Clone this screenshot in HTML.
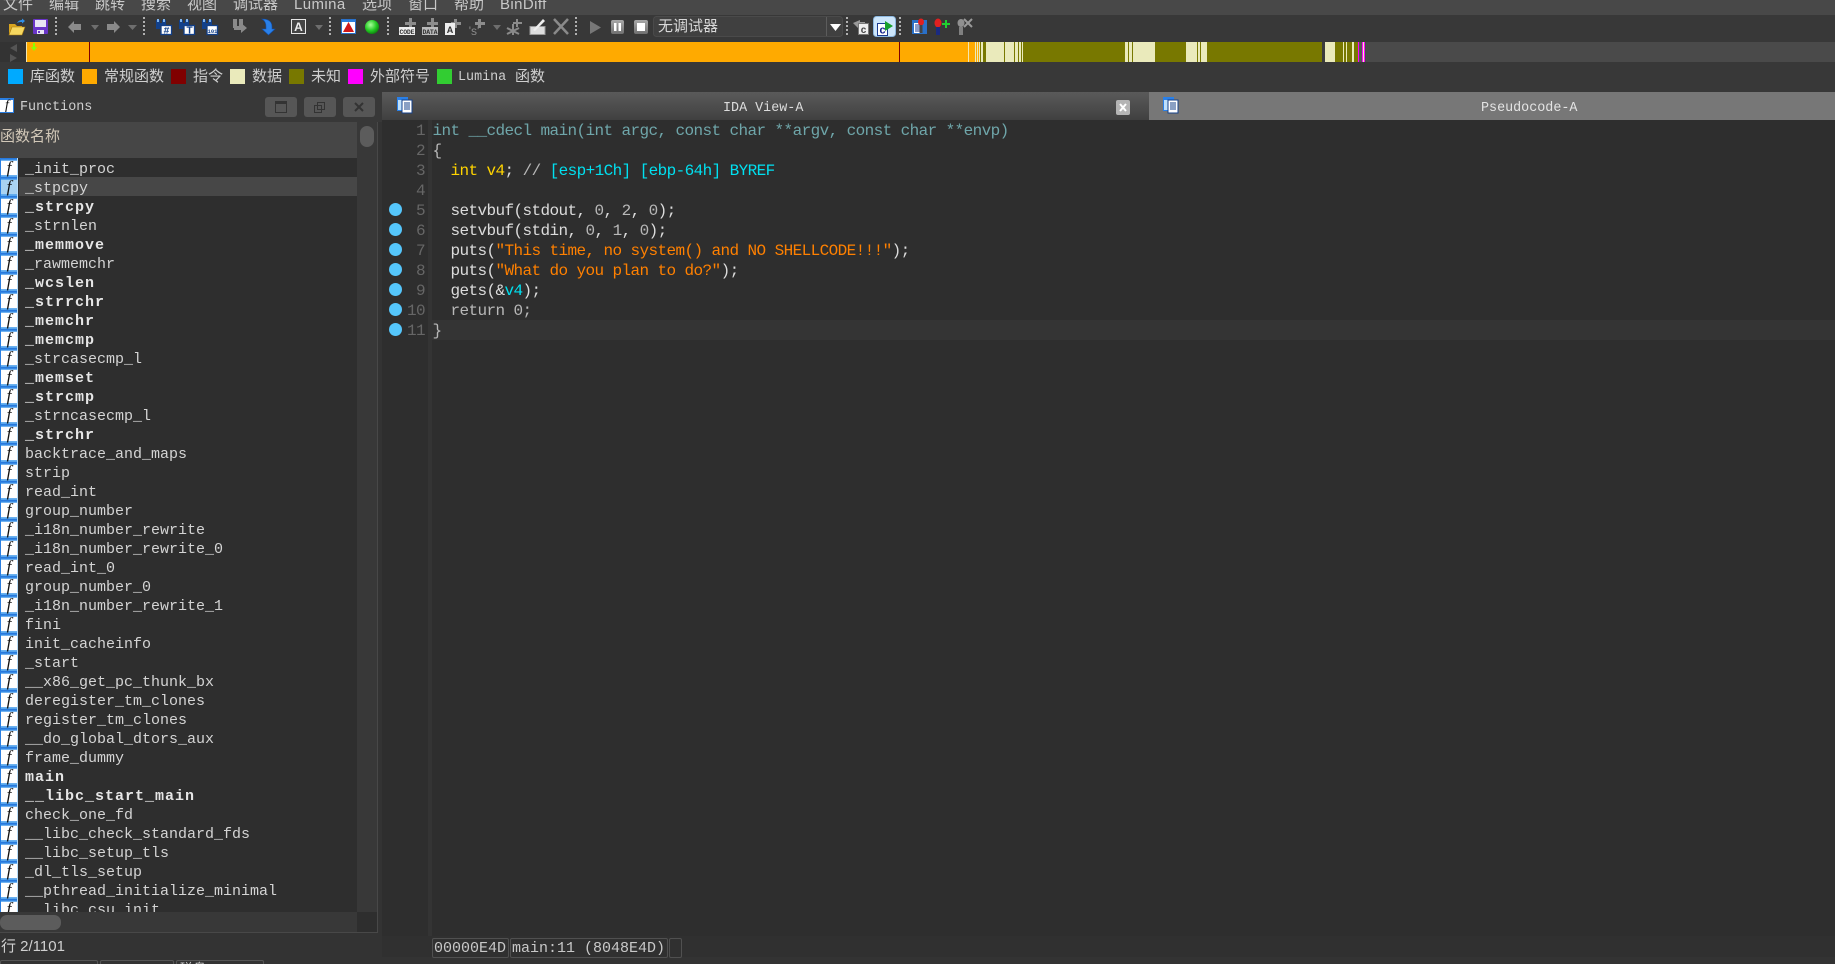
<!DOCTYPE html>
<html><head><meta charset="utf-8"><title>IDA</title>
<style>
html,body{margin:0;padding:0;background:#333;width:1835px;height:964px;overflow:hidden}
body{position:relative;font-family:"Liberation Sans","Noto Sans CJK SC",sans-serif;color:#ccc}
.a{position:absolute;white-space:pre}
.m{font-family:"Liberation Mono","Noto Sans CJK SC",monospace}
.menu{top:-5px;font-size:15px;line-height:20px;color:#c8c8c8}
.lg{top:68px;font-size:15px;line-height:18px;color:#cfcfcf}
.sq{position:absolute;top:69px;width:15px;height:15px}
#list{position:absolute;left:0;top:158px;width:357px;height:754px;overflow:hidden;background:#2e2e2e}
.r{height:19px;font:15px/24px "Liberation Mono",monospace;color:#d4d4d4;white-space:pre;position:relative;padding-left:25px}
.r b{letter-spacing:1px;color:#e6e6e6}
.r i{position:absolute;left:0;top:0;width:18px;height:19px;background:linear-gradient(#1f6fd8,#4aa0ee 14%,#fff 15%,#fff 90%,#5aa8ee 91%);font:italic 17px/19px "Liberation Serif",serif;color:#111;text-align:center;box-shadow:inset 1px 0 #2a7ee0,inset -1px 0 #b8dcf8}
.r.s{background:linear-gradient(#474747,#474747) 19px 0 no-repeat}
.r.s i{background:linear-gradient(#1f6fd8,#4aa0ee 14%,#a9d3f2 15%,#a9d3f2 90%,#5aa8ee 91%)}
.c{position:absolute;left:432.5px;font:16px/20px "Liberation Mono",monospace;letter-spacing:-.6px;white-space:pre;color:#dcdcdc}
.n{position:absolute;left:395px;width:30px;text-align:right;font:16px/20px "Liberation Mono",monospace;letter-spacing:-.6px;color:#666}
.k{color:#6fa6aa}.y{color:#ffd400}.q{color:#00e0f0}.o{color:#ff8000}.g{color:#b8b8b8}.w{color:#dcdcdc}
.d{position:absolute;left:388.5px;width:13px;height:13px;border-radius:50%;background:#55c6fb}
.cell{position:absolute;top:938px;height:18px;border:1px solid #505050;border-radius:2px;font:15px/19px "Liberation Mono",monospace;color:#c8c8c8;white-space:pre;overflow:hidden}
.wb{position:absolute;top:97px;width:32px;height:20px;background:#565656;border-radius:3px}
</style></head><body>

<div class="a" style="left:0;top:0;width:1835px;height:15px;background:#484848"></div>
<div class="a" style="left:0;top:15px;width:1835px;height:27px;background:#383838"></div>
<div class="a" style="left:0;top:62px;width:1835px;height:30px;background:#383838"></div>

<span class="a menu" style="left:3px">文件</span>
<span class="a menu" style="left:49px">编辑</span>
<span class="a menu" style="left:95px">跳转</span>
<span class="a menu" style="left:141px">搜索</span>
<span class="a menu" style="left:187px">视图</span>
<span class="a menu" style="left:233px">调试器</span>
<span class="a menu" style="left:294px;letter-spacing:.4px">Lumina</span>
<span class="a menu" style="left:362px">选项</span>
<span class="a menu" style="left:408px">窗口</span>
<span class="a menu" style="left:454px">帮助</span>
<span class="a menu" style="left:500px;letter-spacing:.4px">BinDiff</span>

<svg class="a" style="left:0;top:0" width="1835" height="64" viewBox="0 0 1835 64">
<defs>
<radialGradient id="gc" cx=".4" cy=".35" r=".7"><stop offset="0" stop-color="#a8ff9a"/><stop offset=".6" stop-color="#22c822"/><stop offset="1" stop-color="#0c7a0c"/></radialGradient>
<linearGradient id="gb" x1="0" y1="0" x2="0" y2="1"><stop offset="0" stop-color="#a8a8a8"/><stop offset="1" stop-color="#707070"/></linearGradient>
<g id="bin"><rect x="1" y="1" width="4" height="9" fill="#12408a"/><rect x="7" y="1" width="4" height="9" fill="#12408a"/><rect x="2" y="0" width="2" height="3" fill="#7fb4ee"/><rect x="8" y="0" width="2" height="3" fill="#7fb4ee"/><rect x="5" y="4" width="2" height="3" fill="#12408a"/><rect x="6" y="6.500" width="10.500" height="9" fill="#fff" stroke="#12408a" stroke-width="1.300"/></g>
</defs>

<!-- folder -->
<path d="M9 24h6l2 2h5v9H9z" fill="#d8a520"/><path d="M9 35l3-8h13l-3 8z" fill="#f6d860" stroke="#a87a10" stroke-width=".6"/><path d="M17 23c1-2 3-3 5-3v-1.500l3 2.500-3 2.500V22c-2 0-3 0-5 1z" fill="#2f8fe8"/>
<!-- save -->
<rect x="33" y="19" width="15" height="15" rx="1" fill="#6a35c8"/><rect x="35" y="20" width="11" height="7" fill="#e8e4f4"/><rect x="37" y="30" width="7" height="4" fill="#e8e4f4"/><rect x="38" y="31" width="2" height="2" fill="#6a35c8"/>
<g stroke="#b0b0b0" stroke-width="2" stroke-dasharray="2 2"><path d="M56 17v18M144 17v18M330 17v18M388 17v18M576 17v18M847 17v18M900 17v18"/></g>
<!-- nav arrows -->
<path d="M68 27l6-6v3h7v6h-7v3z" fill="#8a8a8a"/><path d="M120 27l-6-6v3h-7v6h7v3z" fill="#8a8a8a"/>
<g fill="#6e6e6e"><path d="M91 25h8l-4 5z"/><path d="M128 25h9l-4.500 5z"/><path d="M315 25h8l-4 5z"/><path d="M493 25h8l-4 5z"/></g>
<!-- binoculars -->
<use href="#bin" x="155" y="19"/><use href="#bin" x="178" y="19"/><use href="#bin" x="201" y="19"/>
<text x="166.500" y="33.500" font-family="Liberation Mono" font-weight="bold" font-size="10" fill="#12408a" text-anchor="middle">#</text>
<text x="189.500" y="33.500" font-family="Liberation Sans" font-weight="bold" font-size="10" fill="#12408a" text-anchor="middle">T</text>
<text x="212.500" y="33" font-family="Liberation Mono" font-weight="bold" font-size="5.500" fill="#12408a" text-anchor="middle">101</text>
<!-- grey binoculars -->
<g fill="#8a8a8a"><rect x="233" y="19" width="4" height="9"/><rect x="239" y="19" width="4" height="9"/><path d="M234 26h7v-3l6 5-6 5v-3h-7z"/></g>
<path d="M262 19c6 0 10 2 10 8v2h3l-6.500 6-6.500-6h4v-2c0-4-1-6-4-8z" fill="#2a80e8" stroke="#0f4fb0" stroke-width=".6"/>
<!-- A box -->
<rect x="291.500" y="19.500" width="14" height="14" fill="#444" stroke="#e6e6e6"/><text x="298.500" y="31" font-family="Liberation Sans" font-weight="bold" font-size="12" fill="#eee" text-anchor="middle">A</text>
<!-- warning -->
<rect x="341.500" y="19.500" width="14" height="14" fill="#fff" stroke="#2a70c8"/><rect x="342" y="20" width="13" height="2" fill="#2a80e0"/><path d="M348.500 22l5.500 10h-11z" fill="#d01818"/>
<circle cx="372" cy="27" r="7" fill="url(#gc)"/>
<!-- code/data -->
<g fill="#8c8c8c"><path d="M409 18h3v4h4v3h-4v3h-3v-3h-4v-3h4z"/><path d="M431 18h3v4h4v3h-4v3h-3v-3h-4v-3h4z"/><path d="M454 19h3v3h4v3h-4v3h-3v-3h-3v-3h3z"/><path d="M478 19h3v3h4v3h-4v3h-3v-3h-3v-3h3z"/><path d="M516 19h2v3h4v2h-4v3h-2v-3h-3v-2h3z"/></g>
<rect x="399" y="27" width="16" height="8" fill="#eee"/><text x="407" y="34" font-family="Liberation Mono" font-weight="bold" font-size="6.500" fill="#333" text-anchor="middle" textLength="15">CODE</text>
<rect x="422" y="27" width="16" height="8" fill="#bbb"/><text x="430" y="34" font-family="Liberation Mono" font-weight="bold" font-size="6.500" fill="#333" text-anchor="middle" textLength="15">DATA</text>
<rect x="445" y="23" width="10" height="12" fill="#eee"/><text x="450" y="33" font-family="Liberation Sans" font-weight="bold" font-size="9" fill="#333" text-anchor="middle">A</text>
<text x="474" y="35" font-family="Liberation Sans" font-size="12" fill="#8a8a8a" text-anchor="middle">'s'</text>
<g stroke="#8a8a8a" stroke-width="2"><path d="M507 28l12 6M513 24v11M519 28l-12 6"/></g>
<rect x="530" y="26.500" width="15" height="8" fill="#ddd" stroke="#999"/><path d="M533 30l10-11 2 2-10 10z" fill="#eee"/>
<path d="M554 19l14 15M568 19l-14 15" stroke="#8a8a8a" stroke-width="2.500"/>
<!-- debugger -->
<path d="M590 21l11 6.500-11 6.500z" fill="#777"/>
<rect x="611" y="20" width="13" height="14" rx="2" fill="url(#gb)"/><rect x="614" y="23" width="2.500" height="8" fill="#fff"/><rect x="618.500" y="23" width="2.500" height="8" fill="#fff"/>
<rect x="634" y="20" width="14" height="14" rx="2" fill="url(#gb)"/><rect x="637" y="23" width="8" height="8" fill="#fff"/>
<rect x="653.500" y="16.500" width="189" height="20" rx="3" fill="#404040" stroke="#4a4a4a"/>
<path d="M826.500 17v19" stroke="#5c5c5c"/><path d="M830 24h11l-5.500 7z" fill="#fff"/>
<path d="M853 23l7-3v2h5v6h-5v2z" fill="#999"/><rect x="858.500" y="23.500" width="10" height="11" fill="#eee" stroke="#777"/><text x="863.500" y="33" font-family="Liberation Sans" font-weight="bold" font-size="10" fill="#444" text-anchor="middle">c</text>
<rect x="873.500" y="16.500" width="22" height="20" rx="3" fill="#cde6fb" stroke="#8db8e0"/><rect x="877.500" y="23.500" width="10" height="12" fill="#fff" stroke="#1a3a90"/><text x="882.500" y="33.500" font-family="Liberation Sans" font-weight="bold" font-size="11" fill="#10208a" text-anchor="middle">c</text><path d="M885 21l8 5-8 5z" fill="#17a02c"/>
<rect x="912" y="20" width="15" height="14" fill="#2a70c8"/><rect x="914" y="23" width="7" height="10" fill="#fff"/><g stroke="#1a3a90"><path d="M915 25h5M915 27h5M915 29h5M915 31h5"/></g><ellipse cx="921" cy="22" rx="3" ry="3.500" fill="#e02020"/><rect x="919.500" y="25" width="3" height="8" fill="#444"/>
<ellipse cx="938" cy="23" rx="3.500" ry="4.500" fill="#e02020"/><rect x="936" y="27" width="4" height="8" fill="#1a2a80"/><path d="M946 20v8M942 24h8" stroke="#20d030" stroke-width="2"/>
<ellipse cx="961" cy="23" rx="3.500" ry="4" fill="#909090"/><rect x="959" y="27" width="4" height="8" fill="#808080"/><path d="M964 19l8 8M972 19l-8 8" stroke="#999" stroke-width="2"/>

<!-- nav bar -->
<path d="M10 48l7-4v8zM10 54l7 4-7 4z" fill="#555"/>
<g shape-rendering="crispEdges">
<rect x="1365" y="42" width="470" height="20" fill="#4a4a4a"/>
<rect x="26" y="42" width="1339" height="20" fill="#ffaa00"/>
<rect x="26" y="42" width="1" height="20" fill="#f3e6b0"/>
<rect x="89" y="42" width="1" height="20" fill="#800000"/>
<rect x="899" y="42" width="1" height="20" fill="#800000"/>
<rect x="968" y="42" width="1" height="20" fill="#f3e6b0"/>
<g fill="#787800"><rect x="975" y="42" width="390" height="20"/></g>
<rect x="976" y="42" width="4" height="20" fill="#ffaa00"/>
<g fill="#eaeabb">
<rect x="975" y="42" width="1" height="20"/><rect x="977" y="42" width="1" height="20"/><rect x="979" y="42" width="1" height="20"/><rect x="981" y="42" width="2" height="20"/>
<rect x="986" y="42" width="18" height="20"/><rect x="1005" y="42" width="9" height="20"/><rect x="1015" y="42" width="3" height="20"/><rect x="1019" y="42" width="2" height="20"/><rect x="1022" y="42" width="1" height="20"/>
<rect x="1125" y="42" width="3" height="20"/><rect x="1129" y="42" width="3" height="20"/><rect x="1133" y="42" width="22" height="20"/>
<rect x="1186" y="42" width="11" height="20"/><rect x="1198" y="42" width="2" height="20"/><rect x="1201" y="42" width="6" height="20"/>
<rect x="1325" y="42" width="10" height="20"/><rect x="1343" y="42" width="1" height="20"/><rect x="1346" y="42" width="1" height="20"/><rect x="1352" y="42" width="2" height="20"/>
</g>
<rect x="1322" y="42" width="3" height="20" fill="#3c3c3c"/>
<rect x="1358" y="42" width="1" height="20" fill="#ff00ff"/><rect x="1359" y="42" width="3" height="20" fill="#555"/><rect x="1362" y="42" width="1" height="20" fill="#ff00ff"/><rect x="1363" y="42" width="1" height="20" fill="#eaeabb"/><rect x="1364" y="42" width="1" height="20" fill="#ff00ff"/>
</g>
<path d="M33 43h2v4h2l-3 4-3-4h2z" fill="#8cff00"/>
</svg>
<span class="a" style="left:658px;top:16px;font-size:15px;line-height:20px;color:#d8d8d8;font-family:'Noto Sans CJK SC',sans-serif">无调试器</span>

<!-- legend -->
<div class="sq" style="left:8px;background:#00aaff"></div>
<div class="sq" style="left:82px;background:#ffaa00"></div>
<div class="sq" style="left:171px;background:#800000"></div>
<div class="sq" style="left:230px;background:#eaeabb"></div>
<div class="sq" style="left:289px;background:#787800"></div>
<div class="sq" style="left:348px;background:#ff00ff"></div>
<div class="sq" style="left:437px;background:#32cd32"></div>
<span class="a lg" style="left:30px">库函数</span>
<span class="a lg" style="left:104px">常规函数</span>
<span class="a lg" style="left:193px">指令</span>
<span class="a lg" style="left:252px">数据</span>
<span class="a lg" style="left:311px">未知</span>
<span class="a lg" style="left:370px">外部符号</span>
<span class="a lg m" style="left:458px;top:69px;font-size:13.4px">Lumina</span>
<span class="a lg" style="left:515px">函数</span>

<!-- Functions panel -->
<div class="a" style="left:0;top:92px;width:382px;height:30px;background:#383838"></div>
<div class="a" style="left:0;top:98px;width:14px;height:15px;background:#fff;box-shadow:inset 0 2px #2a7ee0,inset -1px 0 #2a7ee0,inset 0 -1px #2a7ee0;font:italic 14px/16px 'Liberation Serif',serif;color:#111;text-align:center">f</div>
<span class="a m" style="left:20px;top:99px;font-size:13.4px;line-height:18px;color:#cfcfcf">Functions</span>
<div class="wb" style="left:265px"></div><div class="wb" style="left:304px"></div><div class="wb" style="left:343px"></div>
<svg class="a" style="left:265px;top:97px" width="112" height="20" viewBox="0 0 112 20"><rect x="10.500" y="4.500" width="11" height="11" fill="none" stroke="#333"/><rect x="10" y="4" width="12" height="3" fill="#333"/><rect x="49.500" y="8.500" width="7" height="7" fill="none" stroke="#333"/><rect x="52.500" y="5.500" width="7" height="7" fill="none" stroke="#333"/><path d="M90 6l8 8M98 6l-8 8" stroke="#333" stroke-width="2"/></svg>

<div class="a" style="left:0;top:122px;width:357px;height:36px;background:#464646"></div>
<span class="a" style="left:0;top:127px;font-size:15px;line-height:20px;color:#d2c8b8">函数名称</span>

<div id="list">
<div class="r"><i>f</i>_init_proc</div>
<div class="r s"><i>f</i>_stpcpy</div>
<div class="r"><i>f</i><b>_strcpy</b></div>
<div class="r"><i>f</i>_strnlen</div>
<div class="r"><i>f</i><b>_memmove</b></div>
<div class="r"><i>f</i>_rawmemchr</div>
<div class="r"><i>f</i><b>_wcslen</b></div>
<div class="r"><i>f</i><b>_strrchr</b></div>
<div class="r"><i>f</i><b>_memchr</b></div>
<div class="r"><i>f</i><b>_memcmp</b></div>
<div class="r"><i>f</i>_strcasecmp_l</div>
<div class="r"><i>f</i><b>_memset</b></div>
<div class="r"><i>f</i><b>_strcmp</b></div>
<div class="r"><i>f</i>_strncasecmp_l</div>
<div class="r"><i>f</i><b>_strchr</b></div>
<div class="r"><i>f</i>backtrace_and_maps</div>
<div class="r"><i>f</i>strip</div>
<div class="r"><i>f</i>read_int</div>
<div class="r"><i>f</i>group_number</div>
<div class="r"><i>f</i>_i18n_number_rewrite</div>
<div class="r"><i>f</i>_i18n_number_rewrite_0</div>
<div class="r"><i>f</i>read_int_0</div>
<div class="r"><i>f</i>group_number_0</div>
<div class="r"><i>f</i>_i18n_number_rewrite_1</div>
<div class="r"><i>f</i>fini</div>
<div class="r"><i>f</i>init_cacheinfo</div>
<div class="r"><i>f</i>_start</div>
<div class="r"><i>f</i>__x86_get_pc_thunk_bx</div>
<div class="r"><i>f</i>deregister_tm_clones</div>
<div class="r"><i>f</i>register_tm_clones</div>
<div class="r"><i>f</i>__do_global_dtors_aux</div>
<div class="r"><i>f</i>frame_dummy</div>
<div class="r"><i>f</i><b>main</b></div>
<div class="r"><i>f</i><b>__libc_start_main</b></div>
<div class="r"><i>f</i>check_one_fd</div>
<div class="r"><i>f</i>__libc_check_standard_fds</div>
<div class="r"><i>f</i>__libc_setup_tls</div>
<div class="r"><i>f</i>_dl_tls_setup</div>
<div class="r"><i>f</i>__pthread_initialize_minimal</div>
<div class="r"><i>f</i>__libc_csu_init</div>
</div>
<div class="a" style="left:357px;top:122px;width:20px;height:790px;background:#383838"></div>
<div class="a" style="left:360px;top:126px;width:14px;height:21px;background:#5c5c5c;border-radius:7px"></div>
<div class="a" style="left:0;top:912px;width:357px;height:20px;background:#383838"></div>
<div class="a" style="left:357px;top:912px;width:20px;height:20px;background:#2e2e2e"></div>
<div class="a" style="left:0;top:915px;width:61px;height:15px;background:#5c5c5c;border-radius:7px"></div>
<div class="a" style="left:0;top:932px;width:378px;height:1px;background:#484848"></div>
<div class="a" style="left:377px;top:122px;width:1px;height:810px;background:#484848"></div>
<span class="a" style="left:1px;top:937px;font-size:15px;line-height:20px;color:#d0d0d0">行 2/1101</span>

<!-- bottom tabs -->
<div class="a" style="left:0;top:960px;width:96px;height:6px;border:1px solid #555;border-radius:2px"></div>
<div class="a" style="left:100px;top:960px;width:72px;height:6px;border:1px solid #555;border-radius:2px"></div>
<div class="a" style="left:176px;top:960px;width:86px;height:6px;border:1px solid #555;border-radius:2px;overflow:hidden"><span style="position:absolute;left:3px;top:0;font-size:13px;line-height:15px;color:#ccc">磁盘</span></div>

<!-- right panel -->
<div class="a" style="left:382px;top:92px;width:767px;height:28px;background:linear-gradient(#5a5a5a,#404040)"></div>
<div class="a" style="left:1149px;top:92px;width:686px;height:28px;background:#777"></div>
<svg class="a" style="left:397px;top:97px" width="16" height="17" viewBox="0 0 16 17"><rect x="0" y="0" width="11" height="14" fill="#2a80e8"/><rect x="1" y="3" width="9" height="10" fill="#bfe0fb"/><rect x="5" y="3" width="10" height="13" fill="#fff" stroke="#14408a"/><path d="M7 6h6M7 8h6M7 10h6M7 12h6" stroke="#14408a"/></svg>
<svg class="a" style="left:1163px;top:97px" width="16" height="17" viewBox="0 0 16 17"><rect x="0" y="0" width="11" height="14" fill="#2a80e8"/><rect x="1" y="3" width="9" height="10" fill="#bfe0fb"/><rect x="5" y="3" width="10" height="13" fill="#fff" stroke="#14408a"/><path d="M7 6h6M7 8h6M7 10h6M7 12h6" stroke="#14408a"/></svg>
<span class="a m" style="left:723px;top:100px;font-size:13.4px;line-height:18px;color:#dcdcdc">IDA View-A</span>
<span class="a m" style="left:1481px;top:100px;font-size:13.4px;line-height:18px;color:#e4e4e4">Pseudocode-A</span>
<svg class="a" style="left:1116px;top:100px" width="14" height="15" viewBox="0 0 14 15"><rect width="14" height="15" rx="2" fill="#b4b4b4"/><path d="M4 4l6 7M10 4l-6 7" stroke="#fff" stroke-width="2"/></svg>

<div class="a" style="left:382px;top:120px;width:1453px;height:816px;background:#2e2e2e"></div>
<div class="a" style="left:428px;top:120px;width:4px;height:816px;background:#343434"></div>
<div class="a" style="left:428px;top:320px;width:1407px;height:20px;background:#343434"></div>
<div class="a" style="left:382px;top:936px;width:1453px;height:21px;background:#303030"></div>

<div class="n" style="top:121px">1</div>
<div class="n" style="top:141px">2</div>
<div class="n" style="top:161px">3</div>
<div class="n" style="top:181px">4</div>
<div class="n" style="top:201px">5</div>
<div class="n" style="top:221px">6</div>
<div class="n" style="top:241px">7</div>
<div class="n" style="top:261px">8</div>
<div class="n" style="top:281px">9</div>
<div class="n" style="top:301px">10</div>
<div class="n" style="top:321px">11</div>

<div class="d" style="top:203px"></div>
<div class="d" style="top:223px"></div>
<div class="d" style="top:243px"></div>
<div class="d" style="top:263px"></div>
<div class="d" style="top:283px"></div>
<div class="d" style="top:303px"></div>
<div class="d" style="top:323px"></div>

<div class="c k" style="top:121px">int __cdecl main(int argc, const char **argv, const char **envp)</div>
<div class="c g" style="top:141px">{</div>
<div class="c" style="top:161px">  <span class="y">int v4</span><span class="w">;</span> <span class="g">//</span> <span class="q">[esp+1Ch] [ebp-64h] BYREF</span></div>
<div class="c" style="top:201px">  setvbuf(stdout, <span class="g">0</span>, <span class="g">2</span>, <span class="g">0</span>);</div>
<div class="c" style="top:221px">  setvbuf(stdin, <span class="g">0</span>, <span class="g">1</span>, <span class="g">0</span>);</div>
<div class="c" style="top:241px">  puts(<span class="o">"This time, no system() and NO SHELLCODE!!!"</span>);</div>
<div class="c" style="top:261px">  puts(<span class="o">"What do you plan to do?"</span>);</div>
<div class="c" style="top:281px">  gets(&amp;<span class="q">v4</span>);</div>
<div class="c g" style="top:301px">  return 0;</div>
<div class="c g" style="top:321px">}</div>

<div class="cell" style="left:432px;width:74px;padding-left:1px">00000E4D</div>
<div class="cell" style="left:510px;width:155px;padding-left:1px">main:11 (8048E4D)</div>
<div class="cell" style="left:669px;width:11px"></div>
</body></html>
